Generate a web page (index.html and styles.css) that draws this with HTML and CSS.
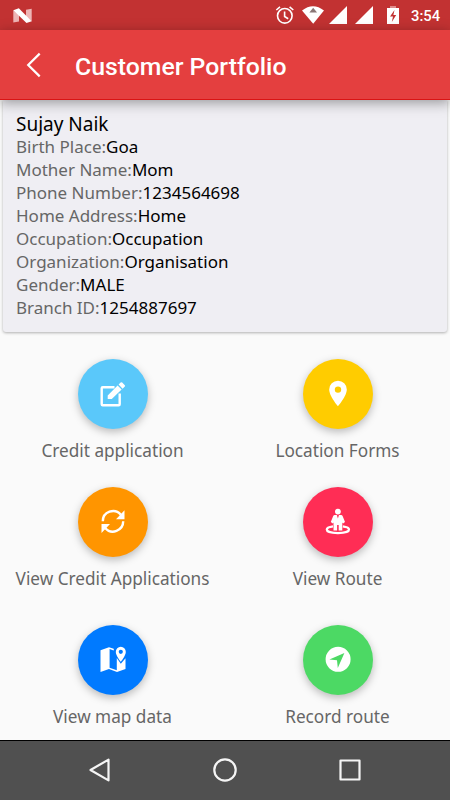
FILE: index.html
```
<!DOCTYPE html>
<html lang="en">
	<head>
		<meta charset="UTF-8" />
		<meta name="viewport" content="width=device-width, initial-scale=1.0" />
		<title>Customer Portfolio</title>
		<link rel="stylesheet" href="styles.css">
	</head>
	<body>
		<div class="statusbar">
			<svg class="status-logo" width="20" height="16" viewBox="0 0 20 16">
				<path d="M.3 2.2 6 6.8v6.6L.3 14.6zM13 1.800l5.700-1v12.600L13 9z" fill="#edb5b5" />
				<path d="M.3 2.200 5.800.2 18.700 13.200 13.500 15z" fill="#fff" />
			</svg>
			<svg class="status-icons" width="130" height="20" viewBox="0 0 130 20">
				<g fill="none" stroke="#fff" stroke-width="1.6">
					<circle cx="13.800" cy="10.800" r="7.300" />
					<path d="M13.600 6.500v5l3.600 2.200M5.300 5 9 1.900M22.300 5l-3.700-3.100" />
				</g>
				<path d="M31 5.500q11-8.500 22 0L42.200 18.700z" fill="#fff" />
				<path d="m42.200 2.800 3.800 4.800h-7.600z" fill="#8a7777" />
				<path d="M76 1v18H58zM102 1v18H84z" fill="#fff" />
				<path d="M119 1h6v2h-6z" fill="#df8c8c" />
				<path d="M116 3h12v16h-12z" fill="#fff" />
				<path d="m123.500 5-4.500 6.500h3L120.800 17l4.400-7h-2.800z" fill="#c23232" />
			</svg>
			<span class="clock">3:54</span>
		</div>

		<header class="appbar">
			<svg class="back" width="16" height="26" viewBox="0 0 16 26">
				<path d="M13.700 1.600 2.200 13l11.500 11.400" fill="none" stroke="#fff" stroke-width="2.200" />
			</svg>
			<h1>Customer Portfolio</h1>
		</header>

		<main class="content">
			<section class="card">
				<h2>Sujay Naik</h2>
				<p>Birth Place:<b>Goa</b></p>
				<p>Mother Name:<b>Mom</b></p>
				<p>Phone Number:<b>1234564698</b></p>
				<p>Home Address:<b>Home</b></p>
				<p>Occupation:<b>Occupation</b></p>
				<p>Organization:<b>Organisation</b></p>
				<p>Gender:<b>MALE</b></p>
				<p>Branch ID:<b>1254887697</b></p>
			</section>

			<section class="menu">
				<div class="menu-item">
					<div class="fab sky">
						<svg width="30" height="30" viewBox="0 0 30 30">
							<path d="M16.500 8.300H4.700q-1 0-1 1v15.900q0 1 1 1h16q1 0 1-1V14.500" fill="none" stroke="#fff" stroke-width="2.400" />
							<path d="M9.700 16.500 19.600 6.600l4 4-9.800 9.500H9.700zM20.600 5.600l2-2q.8-.8 1.600 0l2.600 2.600q.7.700 0 1.400l-2.200 2.200z" fill="#fff" />
						</svg>
					</div>
					<span>Credit application</span>
				</div>
				<div class="menu-item">
					<div class="fab yellow">
						<svg width="30" height="30" viewBox="0 0 30 30">
							<path fill-rule="evenodd" d="M15 1.700a8.800 8.800 0 0 0-8.800 8.900C6.200 17.200 15 27.300 15 27.300s8.800-10.100 8.800-16.700A8.800 8.800 0 0 0 15 1.700m0 12.100a3.200 3.200 0 1 1 0-6.400 3.200 3.200 0 0 1 0 6.400" fill="#fff" />
						</svg>
					</div>
					<span>Location Forms</span>
				</div>
				<div class="menu-item">
					<div class="fab orange">
						<svg width="30" height="30" viewBox="0 0 30 30">
							<path d="M4.800 14.300A10.200 10.200 0 0 1 22.800 7.700M25.200 14.300A10.200 10.200 0 0 1 7.200 20.900" fill="none" stroke="#fff" stroke-width="2.400" />
							<path d="M26.500 3.200v9H18zM3.500 25.900v-9H12z" fill="#fff" />
						</svg>
					</div>
					<span>View Credit Applications</span>
				</div>
				<div class="menu-item">
					<div class="fab pink">
						<svg width="30" height="30" viewBox="0 0 30 30">
							<path d="M10 19.400c-3.700.5-6.200 1.700-6.200 3.200 0 2 4.900 3.500 11.100 3.500S26 24.600 26 22.600c0-1.500-2.500-2.700-6.200-3.200" fill="none" stroke="#fff" stroke-width="2.300" />
							<circle cx="14.900" cy="4.600" r="2.900" fill="#fff" />
							<path d="M11.800 8h2l1.100 3.600L16 8h2q1.200 0 1.700 1.200l2.300 5.900-1.900 1.300-.8-1v8.100h-3.600V18h-1.600v5.500h-3.600v-8.100l-.8 1-1.900-1.300 2.300-5.900Q10.600 8 11.800 8" fill="#fff" />
						</svg>
					</div>
					<span>View Route</span>
				</div>
				<div class="menu-item">
					<div class="fab blue">
						<svg width="30" height="30" viewBox="0 0 30 30">
							<path fill-rule="evenodd" d="M2.500 5.300 11 2.200l4.700 1.600q.4.600-.1 1.700l-4-1.400v18.600l7.200 2.500V13l4 5.700 4.700-5.500v10.700L19 27l-8-2.900-8.500 3z" fill="#fff" />
							<path fill-rule="evenodd" d="M22.800 1.800a5 5 0 0 0-5 5.100c0 3.600 5 9.900 5 9.900s5-6.300 5-9.900a5 5 0 0 0-5-5.100m0 7.100a2.100 2.100 0 1 1 0-4.200 2.100 2.100 0 0 1 0 4.200" fill="#fff" />
						</svg>
					</div>
					<span>View map data</span>
				</div>
				<div class="menu-item">
					<div class="fab green">
						<svg width="30" height="30" viewBox="0 0 30 30">
							<path fill-rule="evenodd" d="M15.100 1.800a12.500 12.500 0 1 0 0 25 12.500 12.500 0 0 0 0-25M21.400 8.100 14.800 23 14 15.300 6.400 14.500z" fill="#fff" />
						</svg>
					</div>
					<span>Record route</span>
				</div>
			</section>
		</main>

		<nav class="navbar">
			<svg width="26" height="26" viewBox="0 0 26 26">
				<path d="M21.500 2.600v20.800L3.500 13z" fill="none" stroke="#f5f5f5" stroke-width="2.200" stroke-linejoin="round" />
			</svg>
			<svg width="26" height="26" viewBox="0 0 26 26">
				<circle cx="13" cy="13" r="10.700" fill="none" stroke="#f5f5f5" stroke-width="2.200" />
			</svg>
			<svg width="26" height="26" viewBox="0 0 26 26">
				<path d="M3.500 3.500h19v19h-19z" fill="none" stroke="#f5f5f5" stroke-width="2.200" stroke-linejoin="round" />
			</svg>
		</nav>
	</body>
</html>
```
FILE: styles.css
```
* {
	margin: 0;
	padding: 0;
	box-sizing: border-box;
}
body {
	display: flex;
	flex-direction: column;
	height: 800px;
	overflow: hidden;
	font-family: "Noto Sans", sans-serif;
	background-color: #fafafa;
}
svg {
	display: block;
}

.statusbar {
	display: flex;
	align-items: center;
	height: 30px;
	padding: 0 9px 0 13px;
	color: #fff;
	background-color: #c23232;
}
.status-logo {
	margin-top: 1px;
}
.status-icons {
	margin-left: auto;
}
.clock {
	margin-left: 10px;
	padding-top: 2px;
	width: 30px;
	font: 500 14.800px Roboto, sans-serif;
	white-space: nowrap;
}

.appbar {
	display: flex;
	align-items: center;
	position: relative;
	z-index: 1;
	height: 70px;
	padding-left: 26px;
	color: #fff;
	background-color: #e43f3f;
	border-bottom: 1px solid #d91414;
	box-shadow: 0 3px 12px rgba(0, 0, 0, 0.36);
}
.appbar h1 {
	margin-left: 33px;
	padding-top: 3px;
	font: 500 24.800px Roboto, sans-serif;
}

.content {
	flex: 1;
}
.card {
	height: 232px;
	margin: 0 3px;
	padding: 12px 13px;
	background-color: #efeef3;
	border-radius: 0 0 3px 3px;
	box-shadow: 0 1px 3px rgba(0, 0, 0, 0.3);
}
.card h2 {
	font-size: 19px;
	font-weight: 400;
	line-height: 24px;
}
.card p {
	font-size: 17px;
	line-height: 23px;
	color: #666;
}
.card b {
	font-weight: 400;
	color: #000;
}
.card p:nth-child(2) {
	margin-top: -1px;
}

.menu {
	display: grid;
	grid-template-columns: 1fr 1fr;
	grid-template-rows: 128px 138px 115px;
	padding-top: 27px;
}
.menu-item {
	display: flex;
	flex-direction: column;
	align-items: center;
	gap: 10px;
	font-size: 17.200px;
	line-height: 24px;
	color: #666;
}
.fab {
	display: flex;
	align-items: center;
	justify-content: center;
	width: 70px;
	height: 70px;
	border-radius: 50%;
	box-shadow: 0 3px 9px rgba(0, 0, 0, 0.26);
}
.sky {
	background-color: #5ac8fa;
}
.yellow {
	background-color: #ffcc00;
}
.orange {
	background-color: #ff9500;
}
.pink {
	background-color: #ff2d55;
}
.blue {
	background-color: #007aff;
}
.green {
	background-color: #4cd964;
}

.navbar {
	display: flex;
	align-items: center;
	justify-content: center;
	gap: 99px;
	height: 60px;
	padding-bottom: 1px;
	background-color: #505050;
	border-top: 1px solid #000;
}
```
